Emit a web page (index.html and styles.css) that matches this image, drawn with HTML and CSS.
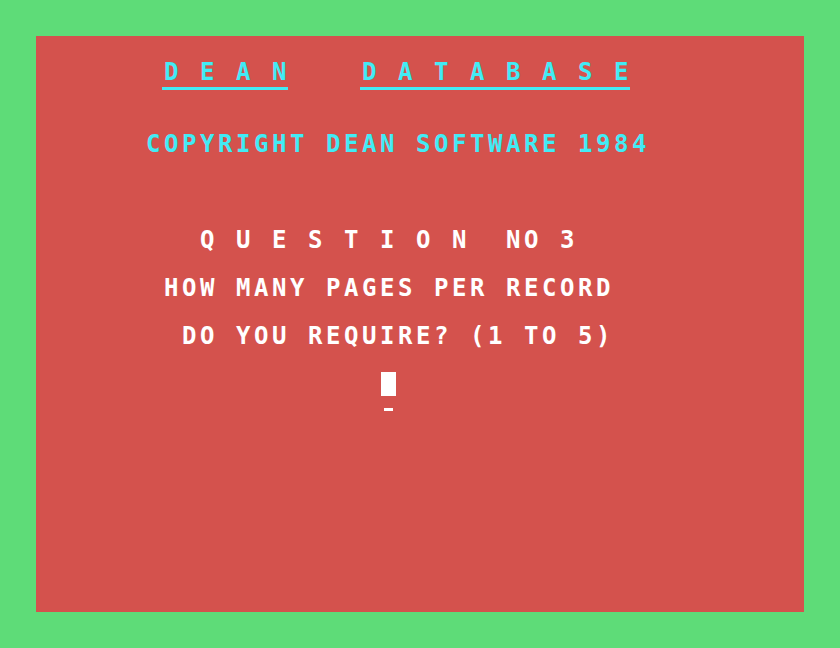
FILE: index.html
```html
<!DOCTYPE html>
<html>
<head>
<meta charset="utf-8">
<link rel="stylesheet" href="styles.css">
</head>
<body>
<div class="screen">
<div class="line cyan r1">       D E A N    D A T A B A S E</div>
<div class="rules r2"><span class="ul ul-dean"></span><span class="ul ul-db"></span></div>
<div class="line cyan r4">      COPYRIGHT DEAN SOFTWARE 1984</div>
<div class="line r8">         Q U E S T I O N  NO 3</div>
<div class="line r10">       HOW MANY PAGES PER RECORD</div>
<div class="line r12">        DO YOU REQUIRE? (1 TO 5)</div>
<div class="cursor-row r14"><span class="cursor"></span></div>
<div class="under-row r15"><span class="under"></span></div>
</div>
</body>
</html>
```
FILE: styles.css
```css
html, body {
  margin: 0;
  padding: 0;
  background: #5edc78;
}
body {
  width: 840px;
  height: 648px;
  overflow: hidden;
}
.screen {
  margin: 36px;
  width: 768px;
  height: 576px;
  background: #d4524d;
  display: grid;
  grid-template-rows: repeat(24, 24px);
  font-family: "DejaVu Sans Mono", monospace;
  font-weight: bold;
  font-size: 24px;
  line-height: 24px;
  color: #ffffff;
}
.line {
  white-space: pre;
  letter-spacing: 3.55px;
  height: 24px;
  padding-left: 2px;
}
.cyan { color: #42ebf5; }
.r1 { grid-row: 2; }
.r2 { grid-row: 3; }
.r4 { grid-row: 5; }
.r8 { grid-row: 9; }
.r10 { grid-row: 11; }
.r12 { grid-row: 13; }
.r14 { grid-row: 15; }
.r15 { grid-row: 16; }
.rules {
  display: flex;
  align-items: flex-start;
  padding: 3px 0 0 126px;
  gap: 72px;
}
.ul {
  display: block;
  height: 3px;
  background: #42ebf5;
}
.ul-dean { width: 126px; }
.ul-db { width: 270px; }
.cursor-row {
  display: flex;
  padding-left: 345px;
}
.cursor {
  display: block;
  width: 15px;
  height: 24px;
  background: #ffffff;
}
.under-row {
  display: flex;
  padding: 12px 0 0 348px;
  align-items: flex-start;
}
.under {
  display: block;
  width: 9px;
  height: 3px;
  background: #ffffff;
}
```
